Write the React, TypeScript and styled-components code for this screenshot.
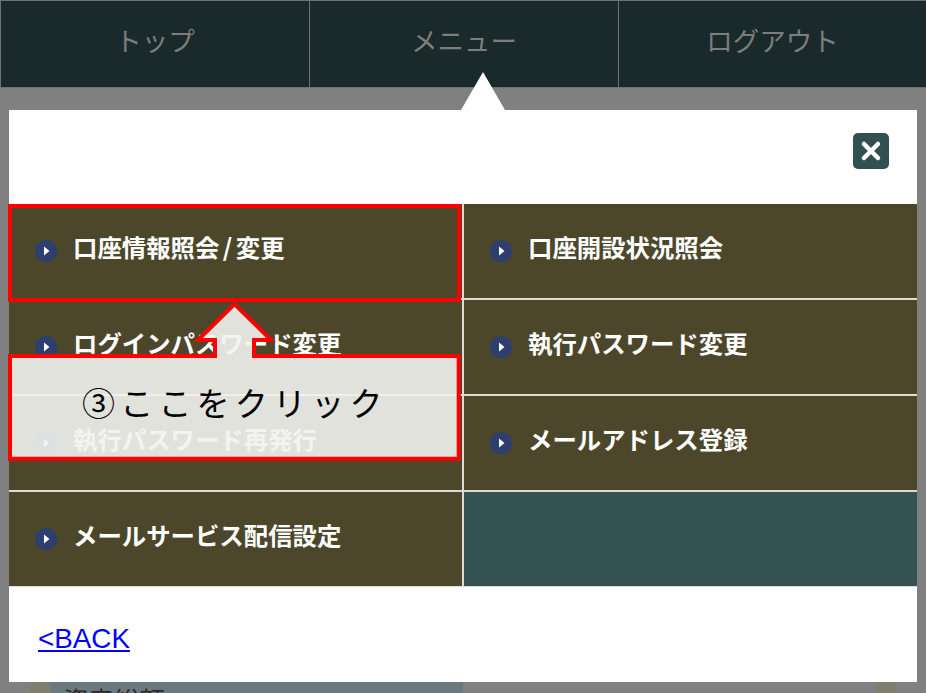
import styled, { createGlobalStyle } from 'styled-components';

const GlobalStyle = createGlobalStyle`
  html, body {
    margin: 0;
    padding: 0;
    background-color: #808080;
  }
  * {
    box-sizing: border-box;
  }
`;

const FONT = `"Noto Sans CJK JP", "Noto Sans", sans-serif`;

const Page = styled.div`
  position: relative;
  width: 926px;
  height: 693px;
  display: flex;
  flex-direction: column;
  overflow: hidden;
  background-color: #808080;
  font-family: ${FONT};
`;

const Nav = styled.div`
  height: 88px;
  display: grid;
  grid-template-columns: 309px 309px 308px;
  flex-shrink: 0;
`;

const NavItem = styled.div`
  display: flex;
  justify-content: center;
  align-items: center;
  padding-bottom: 10px;
  border: 1px solid #6c7272;
  margin-right: -1px;
  background-color: #1a2a2a;
  color: #7d7d7d;
  font-size: 26.5px;
`;

const Panel = styled.div`
  position: relative;
  flex-shrink: 0;
  height: 572px;
  margin: 22px 9px 0;
  display: flex;
  flex-direction: column;
  background-color: #fff;

  &::before {
    content: '';
    position: absolute;
    top: -38px;
    left: 452px;
    border-style: solid;
    border-width: 0 22px 38px;
    border-color: transparent transparent #fff;
  }
`;

const PanelHead = styled.div`
  height: 94px;
  display: flex;
  justify-content: flex-end;
  padding: 23px 28px 0 0;
`;

const CloseButton = styled.div`
  width: 36px;
  height: 36px;
  display: flex;
  justify-content: center;
  align-items: center;
  border-radius: 5px;
  background-color: #335050;
`;

const MenuGrid = styled.div`
  display: grid;
  grid-template-columns: 453px 453px;
  grid-template-rows: repeat(4, 94px);
  gap: 2px;
  background-color: #dcdcd6;
  height: 383px;
`;

const MenuCell = styled.div`
  display: flex;
  align-items: center;
  padding: 0 0 0 26px;
  gap: 16px;
  background-color: #4c472b;
  color: #fff;
  font-size: 24.4px;
  font-weight: 700;
`;

const MenuLabel = styled.span`
  margin-top: -9px;
  white-space: nowrap;
`;

const Slash = styled.span`
  margin: 0 3.5px;
`;

const EmptyCell = styled.div`
  background-color: #345252;
`;

const PanelFoot = styled.div`
  flex: 1;
  display: flex;
  align-items: center;
  padding: 9px 0 0 29px;
`;

const BackLink = styled.a`
  font-family: 'Liberation Sans', sans-serif;
  font-size: 27.8px;
  color: #0000ff;
  text-decoration: underline;
`;

const PeekRow = styled.div`
  flex: 1;
  display: grid;
  grid-template-columns: 20px 413px 1fr 20px;
  margin: 0 30px;
`;

const PeekSide = styled.div`
  background-color: #7f7f6f;
`;

const PeekLabel = styled.div`
  background-color: #6b7880;
  color: #2a2a2a;
  font-size: 25.5px;
  line-height: 30px;
  padding: 2px 0 0 13px;
`;

const PeekValue = styled.div`
  color: #1a1a1a;
  font-size: 22px;
  line-height: 30px;
  word-spacing: 14px;
  padding: 3px 13px 0 0;
  text-align: right;
`;

const Highlight = styled.div`
  position: absolute;
  left: 8px;
  top: 204px;
  width: 453px;
  height: 98px;
  border: 4px solid #ff0000;
`;

const Callout = styled.div`
  position: absolute;
  left: 6px;
  top: 298px;
  width: 456px;
  height: 166px;
`;

const CalloutShape = styled.svg`
  display: block;
`;

const CalloutText = styled.div`
  position: absolute;
  left: 76px;
  top: 82px;
  color: #000;
  font-family: 'Liberation Serif', 'Noto Sans CJK JP', serif;
  font-size: 33px;
  line-height: 50px;
  letter-spacing: 5.2px;
  white-space: nowrap;
`;

const ArrowIcon = () => (
  <svg width="22" height="22" viewBox="0 0 22 22" style={{ flexShrink: 0 }}>
    <circle cx="11" cy="11" r="11" fill="#2d3f6f" />
    <path d="M9 6.5 L14.5 11 L9 15.5 Z" fill="#fff" />
  </svg>
);

const CloseIcon = () => (
  <svg width="22" height="22" viewBox="0 0 22 22">
    <path d="M4 4 L18 18 M18 4 L4 18" stroke="#fff" strokeWidth="4.5" strokeLinecap="round" />
  </svg>
);

const menuItems = [
  '口座情報照会/変更',
  '口座開設状況照会',
  'ログインパスワード変更',
  '執行パスワード変更',
  '執行パスワード再発行',
  'メールアドレス登録',
  'メールサービス配信設定',
];

const App = () => {
  const renderLabel = (item: string) => {
    const parts = item.split('/');
    if (parts.length === 1) return item;
    return (
      <>
        {parts[0]}
        <Slash>/</Slash>
        {parts[1]}
      </>
    );
  };

  return (
    <>
      <GlobalStyle />
      <Page>
        <Nav>
          <NavItem>トップ</NavItem>
          <NavItem>メニュー</NavItem>
          <NavItem>ログアウト</NavItem>
        </Nav>
        <Panel>
          <PanelHead>
            <CloseButton>
              <CloseIcon />
            </CloseButton>
          </PanelHead>
          <MenuGrid>
            {menuItems.map((item) => (
              <MenuCell key={item}>
                <ArrowIcon />
                <MenuLabel>{renderLabel(item)}</MenuLabel>
              </MenuCell>
            ))}
            <EmptyCell />
          </MenuGrid>
          <PanelFoot>
            <BackLink href="#">&lt;BACK</BackLink>
          </PanelFoot>
        </Panel>
        <PeekRow>
          <PeekSide />
          <PeekLabel>資産総額</PeekLabel>
          <PeekValue>0 円</PeekValue>
          <PeekSide />
        </PeekRow>
        <Highlight />
        <Callout>
          <CalloutShape width="456" height="166" viewBox="0 0 456 166">
            <polygon
              points="4,58 209,58 209,42 192,42 228.5,6 265,42 248,42 248,58 452.7,58 452.7,160.7 4,160.7"
              fill="rgba(242,243,240,0.9)"
              stroke="#ff0000"
              strokeWidth="4"
            />
          </CalloutShape>
          <CalloutText>③ここをクリック</CalloutText>
        </Callout>
      </Page>
    </>
  );
};

export default App;
